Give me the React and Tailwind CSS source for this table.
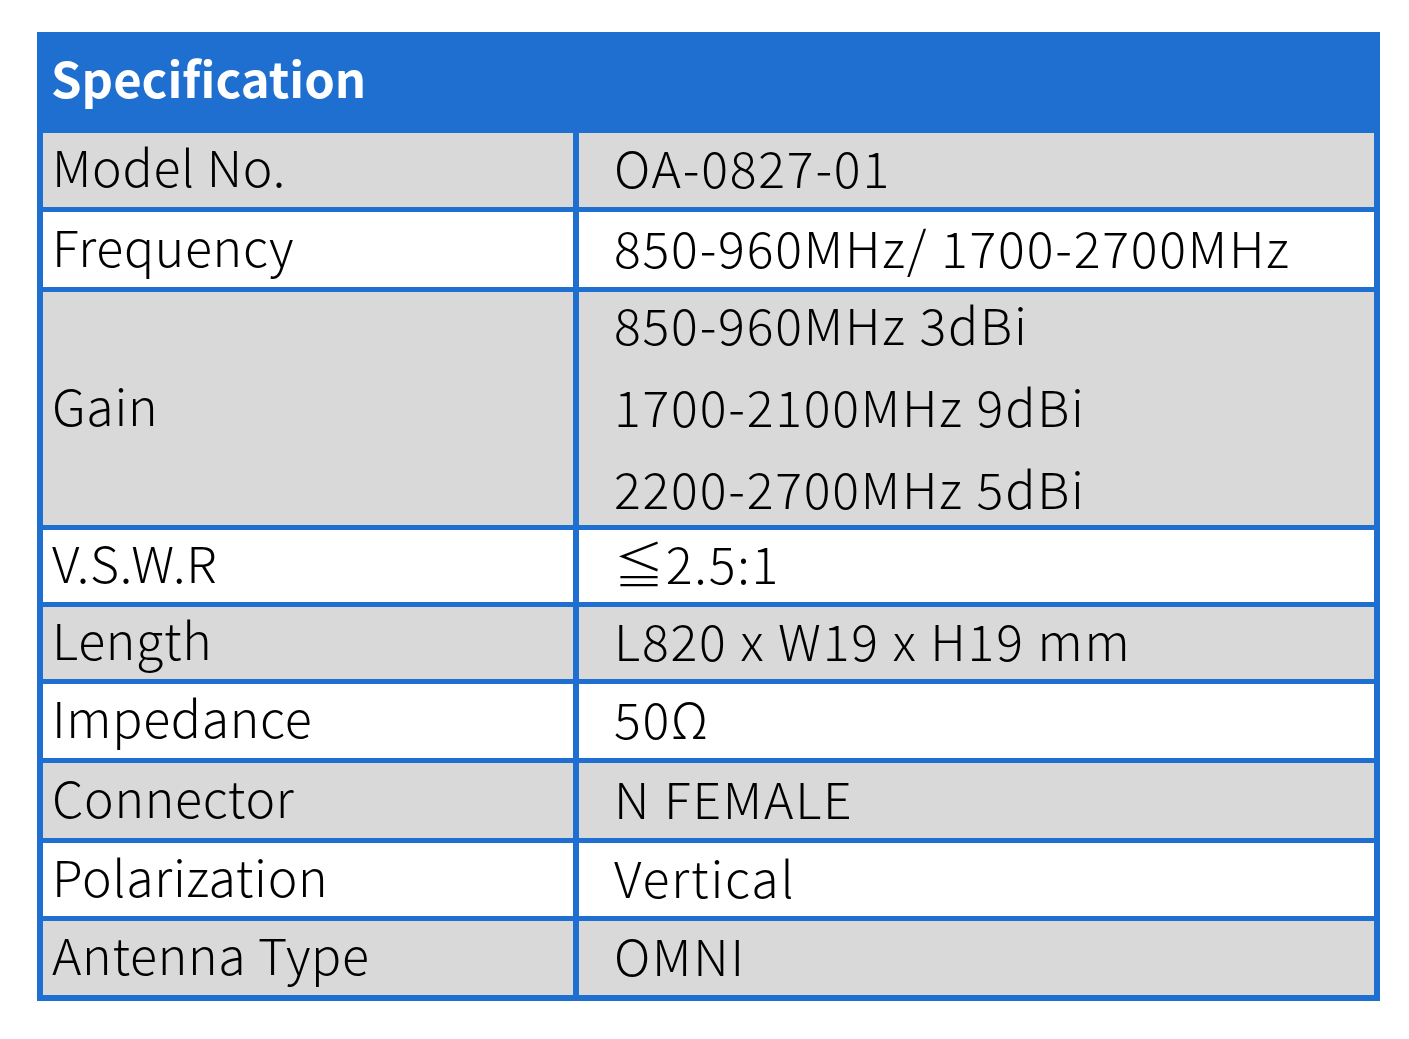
import React from 'react';

const rows = [
  { label: 'Model No.', value: ['OA-0827-01'], h: 'h-[74px]', bg: 'bg-[#d9d9d9]' },
  { label: 'Frequency', value: ['850-960MHz/ 1700-2700MHz'], h: 'h-[75px]', bg: 'bg-white' },
  {
    label: 'Gain',
    value: ['850-960MHz 3dBi', '1700-2100MHz 9dBi', '2200-2700MHz 5dBi'],
    h: 'h-[233px]',
    bg: 'bg-[#d9d9d9]',
  },
  { label: 'V.S.W.R', value: ['≦2.5:1'], h: 'h-[72px]', bg: 'bg-white' },
  { label: 'Length', value: ['L820 x W19 x H19 mm'], h: 'h-[72px]', bg: 'bg-[#d9d9d9]' },
  { label: 'Impedance', value: ['50Ω'], h: 'h-[74px]', bg: 'bg-white' },
  { label: 'Connector', value: ['N FEMALE'], h: 'h-[75px]', bg: 'bg-[#d9d9d9]' },
  { label: 'Polarization', value: ['Vertical'], h: 'h-[73px]', bg: 'bg-white' },
  { label: 'Antenna Type', value: ['OMNI'], h: 'h-[74px]', bg: 'bg-[#d9d9d9]' },
];

export default function App() {
  return (
    <div
      className="w-[1409px] h-[1039px] bg-white pt-[32px] pl-[37px]"
      style={{ fontFamily: '"Noto Sans CJK JP", "Noto Sans", sans-serif' }}
    >
      <div className="w-[1343px] bg-[#1f6fd0] px-[6px] pb-[6px]">
        <div className="h-[101px] flex items-center pl-[8px] pb-[12px]">
          <h1 className="text-[49px] font-bold text-white leading-none">Specification</h1>
        </div>
        <div className="flex flex-col gap-y-[5px]">
          {rows.map((r) => (
            <div key={r.label} className={`grid grid-cols-[530px_795px] gap-x-[6px] ${r.h}`}>
              <div className={`${r.bg} flex items-center pl-[9px] pb-[10px]`}>
                <span className="text-[50px] font-light text-black leading-none tracking-[0.7px]">
                  {r.label}
                </span>
              </div>
              <div className={`${r.bg} flex flex-col justify-center pl-[35px] pb-[8px] gap-y-[30px]`}>
                {r.value.map((v) => (
                  <span key={v} className="text-[50px] font-light text-black leading-[52px] tracking-[1.8px]">
                    {v}
                  </span>
                ))}
              </div>
            </div>
          ))}
        </div>
      </div>
    </div>
  );
}
